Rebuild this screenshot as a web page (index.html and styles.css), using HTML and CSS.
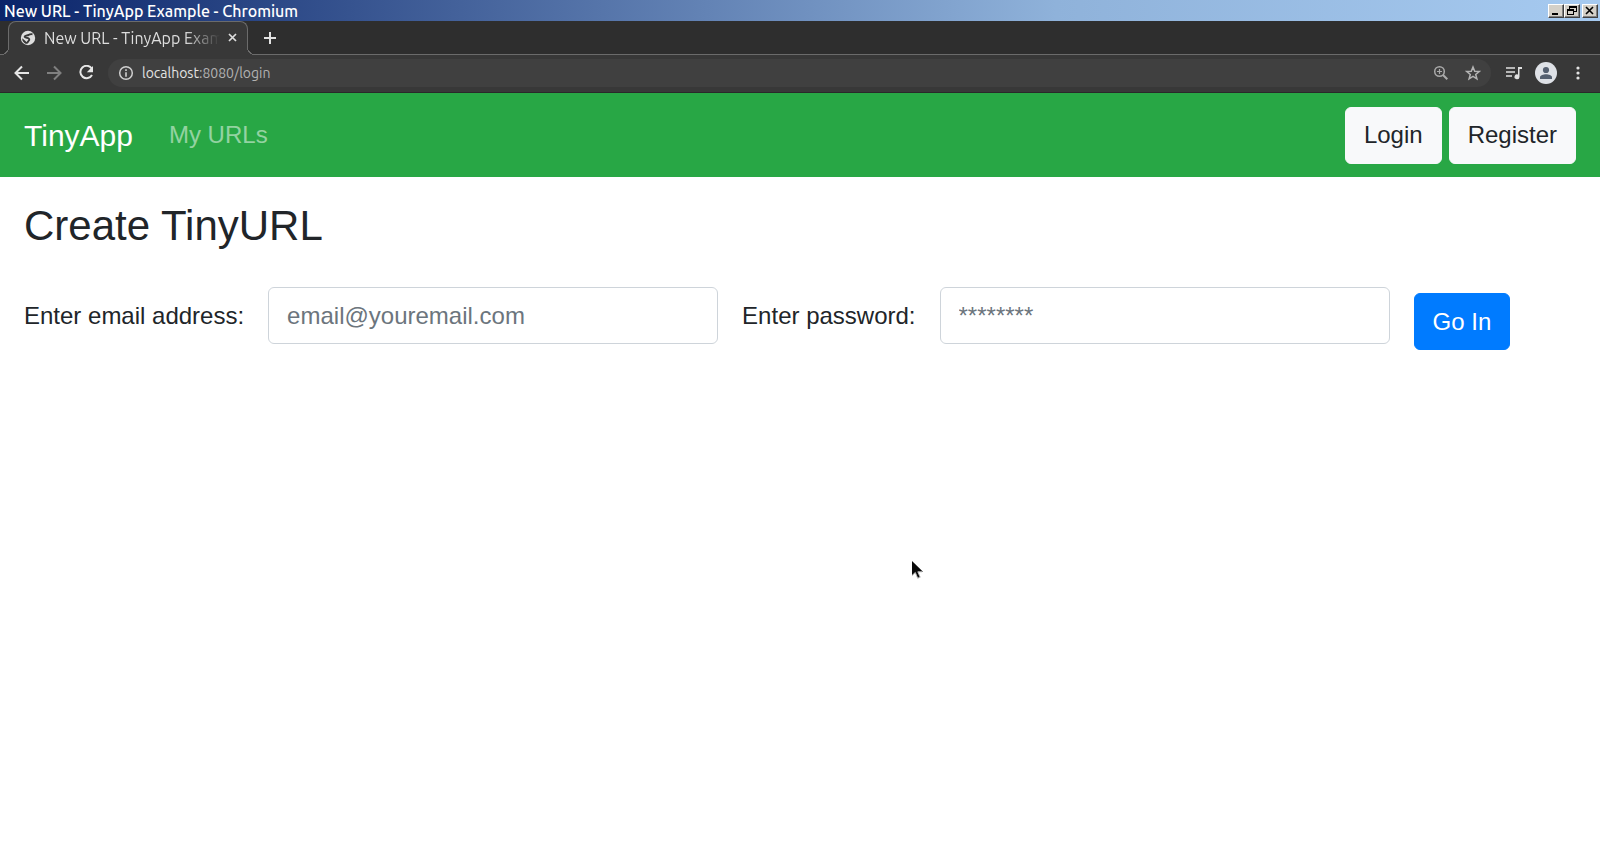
FILE: index.html
```html
<!DOCTYPE html>
<html lang="en">
<head>
<meta charset="utf-8">
<title>New URL - TinyApp Example</title>
<link rel="stylesheet" href="styles.css">
</head>
<body>
<header class="browser">
  <div class="titlebar">
    <span class="window-title">New URL - TinyApp Example - Chromium</span>
    <div class="window-buttons">
      <button class="win" aria-label="Minimize"><svg width="12" height="10" viewBox="0 0 12 10"><path d="M2 7h6v2H2z"/></svg></button>
      <button class="win" aria-label="Restore"><svg width="12" height="10" viewBox="0 0 12 10"><path d="M3 0h8v6H8V5h2V2H4v1H3zM1 3h7v6H1zM2 5v3h5V5z" fill-rule="evenodd"/></svg></button>
      <button class="win win-close" aria-label="Close"><svg width="12" height="10" viewBox="0 0 12 10"><path d="M2 1l7 7M9 1L2 8" stroke="#000" stroke-width="1.600"/></svg></button>
    </div>
  </div>
  <div class="tabstrip">
    <div class="tab">
      <svg width="16" height="16" viewBox="0 0 16 16"><circle cx="8" cy="8" r="7.200" fill="#dedede"/><path d="M12.500 4.200C10.500 4 9.500 4.200 8.500 5 7 5.600 4.800 5.500 4.600 6.800 5 8.200 8.500 7.300 9.200 9c.5 1.600-.9 1.700-1.400 3-.5 1-1.800 1.200-2.800.2" fill="none" stroke="#383838" stroke-width="1.900"/><path d="M2.200 8.200l3.600 3 .4 2.400C3.800 13 2 11 2.200 8.200z" fill="#383838"/></svg>
      <span class="tab-title">New URL - TinyApp Example</span>
      <button class="icon" aria-label="Close tab"><svg width="9" height="9" viewBox="0 0 9 9"><path d="M1 1l7 7M8 1L1 8" stroke="#dedede" stroke-width="1.700"/></svg></button>
    </div>
    <button class="icon new-tab" aria-label="New tab"><svg width="12" height="12" viewBox="0 0 12 12"><path d="M6 0v12M0 6h12" stroke="#e3e3e3" stroke-width="2"/></svg></button>
  </div>
  <div class="toolbar">
    <div class="nav-icons">
      <button class="icon" aria-label="Back"><svg width="16" height="16" viewBox="0 0 16 16"><path d="M15 8H2M8 1.500L1.500 8 8 14.500" fill="none" stroke="#e6e6e6" stroke-width="2"/></svg></button>
      <button class="icon" aria-label="Forward"><svg width="16" height="16" viewBox="0 0 16 16"><path d="M1 8h13M8 1.500L14.500 8 8 14.500" fill="none" stroke="#808080" stroke-width="2"/></svg></button>
      <button class="icon" aria-label="Reload"><svg width="16" height="16" viewBox="0 0 16 16"><path d="M13.700 3.500A6.200 6.200 0 1 0 14 10" fill="none" stroke="#e6e6e6" stroke-width="2"/><path d="M15 1v6.200H8.800z" fill="#e6e6e6"/></svg></button>
    </div>
    <div class="omnibox">
      <svg width="16" height="16" viewBox="0 0 16 16"><circle cx="8" cy="8" r="6.300" fill="none" stroke="#d0d0d0" stroke-width="1.500"/><path d="M7.200 4.300h1.600v1.600H7.200zM7.200 7.200h1.600v4.500H7.200z" fill="#d0d0d0"/></svg>
      <div class="address"><span class="host">localhost</span>:8080/login</div>
      <button class="icon" aria-label="Zoom"><svg width="16" height="16" viewBox="0 0 16 16"><circle cx="6.500" cy="6.500" r="4.800" fill="none" stroke="#aaa" stroke-width="1.500"/><path d="M6.500 4v5M4 6.500h5" stroke="#aaa" stroke-width="1.200"/><path d="M10 10l4.300 4.300" stroke="#aaa" stroke-width="2"/></svg></button>
      <button class="icon" aria-label="Bookmark"><svg width="16" height="16" viewBox="0 0 16 16"><path d="M8 2l1.700 4.200 4.500.3-3.500 2.900 1.200 4.400L8 11.400l-3.900 2.400 1.200-4.400L1.800 6.500l4.500-.3z" fill="none" stroke="#b4b4b4" stroke-width="1.500"/></svg></button>
    </div>
    <div class="actions">
      <button class="icon" aria-label="Media"><svg width="17" height="14" viewBox="0 0 17 14"><path d="M1 2h9M1 6h9M1 10h6" stroke="#e0e0e0" stroke-width="1.600"/><path d="M17 1h-4v7.500a2.500 2.500 0 1 0 1.500 2.300V3H17z" fill="#e0e0e0"/></svg></button>
      <button class="icon" aria-label="Profile"><svg width="22" height="22" viewBox="0 0 22 22"><circle cx="11" cy="11" r="11" fill="#dee1e6"/><circle cx="11" cy="8" r="3.100" fill="#556070"/><path d="M5 17v-1.700c0-2 3.500-3 6-3s6 1 6 3V17z" fill="#556070"/></svg></button>
      <button class="icon" aria-label="Menu"><svg width="4" height="14" viewBox="0 0 4 14"><g fill="#e3e3e3"><circle cx="2" cy="2" r="1.600"/><circle cx="2" cy="7" r="1.600"/><circle cx="2" cy="12" r="1.600"/></g></svg></button>
    </div>
  </div>
</header>
<nav class="navbar">
  <a class="brand" href="#">TinyApp</a>
  <a class="nav-link" href="#">My URLs</a>
  <div class="account">
    <button class="btn btn-light">Login</button>
    <button class="btn btn-light">Register</button>
  </div>
</nav>
<main class="content">
  <h1>Create TinyURL</h1>
  <form class="login">
    <label for="email">Enter email address:</label>
    <input id="email" type="email" placeholder="email@youremail.com">
    <label for="password">Enter password:</label>
    <input id="password" type="password" placeholder="********">
    <button class="btn btn-primary" type="submit">Go In</button>
  </form>
</main>
<svg class="cursor" width="14" height="20" viewBox="0 0 14 20"><path d="M1 1v14.500l3.300-3 2.400 5.700 2.500-1-2.400-5.400H12z" fill="#0a0a0a"/><path d="M1 15.500l3.300-3 2.400 5.700 2.500-1-2.400-5.400H11" fill="none" stroke="#bbb"/></svg>
</body>
</html>
```
FILE: styles.css
```css
* { box-sizing: border-box; }
body {
  margin: 0;
  background: #fff;
  color: #212529;
  font: 24px/36px "Liberation Sans", Arial, sans-serif;
}
button, input { font: inherit; }
svg { display: block; flex: none; }

.browser {
  background: #383838;
  border-bottom: 1px solid #292929;
  font-family: Ubuntu, "Noto Sans", sans-serif;
}
.titlebar {
  display: flex;
  align-items: center;
  justify-content: space-between;
  height: 21px;
  padding: 0 2px 0 4px;
  background: linear-gradient(90deg, #0a246a, #8fb2da 66%, #a6caf0);
}
.window-title { color: #fff; font-size: 16px; line-height: 20px; font-weight: 500; }
.window-buttons { display: flex; }
.win {
  display: grid;
  place-items: center;
  width: 16px;
  height: 14px;
  padding: 0;
  background: #d4d0c8;
  border: 1px solid;
  border-color: #fff #404040 #404040 #fff;
  box-shadow: inset -1px -1px #808080;
}
.win-close { margin-left: 2px; }
.icon {
  display: flex;
  padding: 0;
  border: 0;
  background: none;
}

.tabstrip {
  display: flex;
  height: 34px;
  padding-left: 8px;
  background: linear-gradient(#6b6b6b, #6b6b6b) bottom / 100% 1px no-repeat #2e2e2e;
}
.tab {
  position: relative;
  display: flex;
  align-items: center;
  gap: 8px;
  width: 240px;
  padding: 0 10px 2px 11px;
  background: #383838;
  border: 1px solid #6b6b6b;
  border-bottom: 0;
  border-radius: 8px 8px 0 0;
}
.tab::before, .tab::after {
  content: "";
  position: absolute;
  bottom: 0;
  width: 8px;
  height: 8px;
}
.tab::before {
  left: -8px;
  background: radial-gradient(circle at 0 0, #2e2e2e 7px, #6b6b6b 7px 8px, #383838 8px);
}
.tab::after {
  right: -8px;
  background: radial-gradient(circle at 100% 0, #2e2e2e 7px, #6b6b6b 7px 8px, #383838 8px);
}
.tab-title {
  flex: 1;
  min-width: 0;
  overflow: hidden;
  white-space: nowrap;
  font-size: 16px;
  line-height: 24px;
  color: #dedede;
  mask-image: linear-gradient(90deg, #000 80%, transparent);
}
.new-tab { align-items: center; padding: 0 16px; }

.toolbar {
  display: flex;
  align-items: center;
  gap: 14px;
  height: 37px;
  padding: 0 20px 2px 14px;
}
.nav-icons { display: flex; gap: 16px; }
.omnibox {
  flex: 1;
  display: flex;
  align-items: center;
  gap: 8px;
  height: 28px;
  padding: 0 10px;
  border-radius: 14px;
  background: #404040;
}
.omnibox .icon + .icon { margin-left: 8px; }
.address { flex: 1; font-size: 14px; line-height: 20px; color: #b2b2b2; }
.host { color: #e3e3e3; }
.actions { display: flex; align-items: center; gap: 13px; }
.actions .icon:last-child { margin-left: 6px; }

.navbar {
  display: flex;
  align-items: center;
  min-height: 84px;
  padding: 12px 24px;
  background: #28a745;
}
.brand { color: #fff; font-size: 30px; line-height: 45px; text-decoration: none; }
.nav-link { margin-left: 36px; color: rgba(255, 255, 255, .5); text-decoration: none; }
.account { display: flex; gap: 7px; margin-left: auto; }
.btn {
  height: 57px;
  padding: 0 18px;
  border: 1px solid;
  border-radius: 6px;
}
.btn-light { background: #f8f9fa; border-color: #f8f9fa; color: #212529; }
.btn-primary { background: #007bff; border-color: #007bff; color: #fff; }

.content { padding: 24px; }
h1 { margin: 0 0 30px; font-size: 42px; line-height: 50px; font-weight: 400; }
.login { display: flex; align-items: center; gap: 24px; white-space: nowrap; }
.login input {
  flex: 1;
  min-width: 0;
  max-width: 450px;
  height: 57px;
  padding: 0 18px;
  border: 1px solid #ced4da;
  border-radius: 6px;
  background: #fff;
  color: #495057;
}
.login input::placeholder { color: #6c757d; opacity: 1; }
.login .btn { margin: 12px 0 0; }
.cursor { position: absolute; left: 911px; top: 560px; }
```
